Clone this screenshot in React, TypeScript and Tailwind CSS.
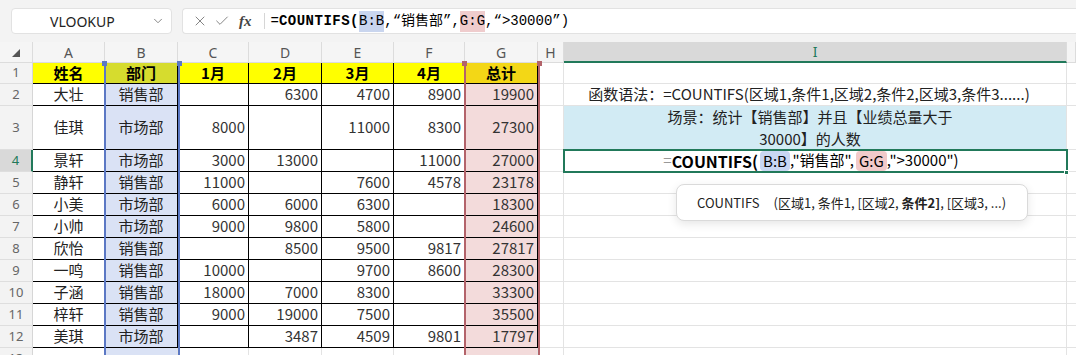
import { X, Check, ChevronDown } from 'lucide-react'

const W = [
  'w-[33px]', 'w-[72px]', 'w-[73px]', 'w-[71px]', 'w-[73px]', 'w-[72px]',
  'w-[71px]', 'w-[73px]', 'w-[26px]', 'w-[503px]', 'w-[9px]',
]
const LETTERS = ['', 'A', 'B', 'C', 'D', 'E', 'F', 'G', 'H', 'I', '']

const HEAD = ['姓名', '部门', '1月', '2月', '3月', '4月', '总计']
const DATA = [
  ['大壮', '销售部', '', '6300', '4700', '8900', '19900'],
  ['佳琪', '市场部', '8000', '', '11000', '8300', '27300'],
  ['景轩', '市场部', '3000', '13000', '', '11000', '27000'],
  ['静轩', '销售部', '11000', '', '7600', '4578', '23178'],
  ['小美', '市场部', '6000', '6000', '6300', '', '18300'],
  ['小帅', '市场部', '9000', '9800', '5800', '', '24600'],
  ['欣怡', '销售部', '', '8500', '9500', '9817', '27817'],
  ['一鸣', '销售部', '10000', '', '9700', '8600', '28300'],
  ['子涵', '销售部', '18000', '7000', '8300', '', '33300'],
  ['梓轩', '销售部', '9000', '19000', '7500', '', '35500'],
  ['美琪', '市场部', '', '3487', '4509', '9801', '17797'],
]

const headBg = ['bg-[#ffff00]', 'bg-[#d6dc2e]', 'bg-[#ffff00]', 'bg-[#ffff00]', 'bg-[#ffff00]', 'bg-[#ffff00]', 'bg-[#f3d716]']

function RowHead({ n, h, active }: { n: number; h: string; active?: boolean }) {
  return (
    <div
      className={`${W[0]} ${h} shrink-0 flex items-center justify-center border-b border-b-[#dedede] text-[13px] font-['Noto_Sans',sans-serif] ${
        active
          ? 'bg-[#d9d9d9] text-[#21795a] border-r-2 border-r-[#21795a]'
          : 'bg-[#f3f3f3] text-[#666] border-r border-r-[#d6d6d6]'
      }`}
    >
      {n}
    </div>
  )
}

function RightCells({ h, children, iClass = '' }: { h: string; children?: React.ReactNode; iClass?: string }) {
  return (
    <>
      <div className={`${W[8]} ${h} shrink-0 border-r border-b border-[#e3e3e3]`} />
      <div className={`${W[9]} ${h} shrink-0 border-r border-b border-[#e3e3e3] flex flex-col items-center justify-center text-[15px] text-[#222] ${iClass}`}>
        {children}
      </div>
      <div className={`${W[10]} ${h} shrink-0 border-b border-[#e3e3e3]`} />
    </>
  )
}

function DataCells({ row, h }: { row: string[]; h: string }) {
  return (
    <>
      {row.map((v, i) => {
        const num = i >= 2
        const bg = i === 1 ? 'bg-[#dae2f5]' : i === 6 ? 'bg-[#f3dbdb]' : 'bg-white'
        return (
          <div
            key={i}
            className={`${W[i + 1]} ${h} shrink-0 flex items-center border-r border-b border-black text-[15px] ${bg} ${
              num ? 'justify-end pr-[3px] text-[#333]' : 'justify-center text-[#222]'
            }`}
          >
            {v}
          </div>
        )
      })}
    </>
  )
}

export default function App() {
  return (
    <div className="relative w-[1076px] h-[355px] overflow-hidden bg-white font-['Noto_Sans_CJK_SC','Noto_Sans',sans-serif]">
      {/* Formula bar */}
      <div className="h-[42px] bg-[#f3f3f3] flex items-start pt-[8px] pl-[11px] gap-[10px]">
        <div className="w-[161px] h-[26px] bg-white border border-[#e2e2e2] rounded-[4px] flex items-center justify-between pl-[38px] pr-[6px]">
          <span className="text-[14px] text-[#222] font-['Noto_Sans',sans-serif]">VLOOKUP</span>
          <ChevronDown size={14} strokeWidth={1.5} className="text-[#777]" />
        </div>
        <div className="flex-1 h-[26px] bg-white border border-[#e2e2e2] border-r-0 rounded-l-[4px] flex items-center">
          <div className="flex items-center gap-[6px] pl-[9px] text-[#666]">
            <X size={16} strokeWidth={1.2} />
            <Check size={16} strokeWidth={1.2} />
            <span className="ml-[3px] text-[15px] italic font-bold font-['Liberation_Serif',serif] text-[#444]">fx</span>
          </div>
          <div className="ml-[12px] w-px h-[16px] bg-[#d6d6d6]" />
          <div className="ml-[6px] flex items-center text-[14px] text-black font-['Liberation_Mono','Noto_Sans_CJK_SC',monospace] whitespace-pre">
            <span>=</span>
            <span className="font-bold tracking-[0.5px]">COUNTIFS(</span>
            <span className="bg-[#c9d5ee]">B:B</span>
            <span>,“销售部”,</span>
            <span className="bg-[#efcccd]">G:G</span>
            <span>,“&gt;30000”)</span>
          </div>
        </div>
      </div>

      {/* Column headers */}
      <div className="flex h-[21px]">
        {LETTERS.map((l, i) => (
          <div
            key={i}
            className={`${W[i]} h-[21px] shrink-0 flex items-center justify-center text-[14px] font-['Noto_Sans',sans-serif] border-r border-r-[#dcdcdc] ${
              i === 9
                ? 'bg-[#d9d9d9] text-[#21795a] border-b-2 border-b-[#21795a]'
                : 'bg-[#f5f5f5] text-[#555] border-b border-b-[#dcdcdc]'
            }`}
          >
            {i === 0 ? (
              <svg width="8" height="8" viewBox="0 0 8 8" className="mt-[2px]">
                <polygon points="8,0 8,8 0,8" fill="#555" />
              </svg>
            ) : (
              l
            )}
          </div>
        ))}
      </div>

      {/* Row 1 */}
      <div className="flex">
        <RowHead n={1} h="h-[21px]" />
        {HEAD.map((v, i) => (
          <div
            key={i}
            className={`${W[i + 1]} h-[21px] shrink-0 flex items-center justify-center border-r border-b border-black text-[15px] font-bold text-black ${headBg[i]}`}
          >
            {v}
          </div>
        ))}
        <RightCells h="h-[21px]" />
      </div>

      {/* Row 2 */}
      <div className="flex">
        <RowHead n={2} h="h-[22px]" />
        <DataCells row={DATA[0]} h="h-[22px]" />
        <RightCells h="h-[22px]" iClass="pr-[12px]">
          <span className="whitespace-nowrap">函数语法：=COUNTIFS(区域1,条件1,区域2,条件2,区域3,条件3......)</span>
        </RightCells>
      </div>

      {/* Row 3 */}
      <div className="flex">
        <RowHead n={3} h="h-[44px]" />
        <DataCells row={DATA[1]} h="h-[44px]" />
        <RightCells h="h-[44px]" iClass="bg-[#d2ebf4] leading-[22px] pr-[10px]">
          <span>场景：统计【销售部】并且【业绩总量大于</span>
          <span>30000】的人数</span>
        </RightCells>
      </div>

      {/* Row 4 */}
      <div className="flex">
        <RowHead n={4} h="h-[22px]" active />
        <DataCells row={DATA[2]} h="h-[22px]" />
        <RightCells h="h-[22px]" iClass="pr-[8px]">
          <div className="flex items-center whitespace-pre text-[15px] text-black">
            <span className="text-[#999]">=</span>
            <span className="font-bold text-[16px]">COUNTIFS(</span>
            <span className="ml-[2px] px-[3px] bg-[#c8d6f2] rounded-[4px] leading-[20px]">B:B</span>
            <span>,"销售部",</span>
            <span className="ml-[2px] px-[3px] bg-[#f2caca] rounded-[4px] leading-[20px]">G:G</span>
            <span>,"&gt;30000")</span>
          </div>
        </RightCells>
      </div>

      {/* Rows 5-12 */}
      {DATA.slice(3).map((r, k) => (
        <div key={k} className="flex">
          <RowHead n={k + 5} h="h-[22px]" />
          <DataCells row={r} h="h-[22px]" />
          <RightCells h="h-[22px]" />
        </div>
      ))}

      {/* Row 13 */}
      <div className="flex">
        <RowHead n={13} h="h-[22px]" />
        {W.slice(1, 8).map((w, i) => (
          <div
            key={i}
            className={`${w} h-[22px] shrink-0 border-r border-b border-[#e3e3e3] ${
              i === 1 ? 'bg-[#dae2f5]' : i === 6 ? 'bg-[#f3dbdb]' : ''
            }`}
          />
        ))}
        <RightCells h="h-[22px]" />
      </div>

      {/* Range highlights */}
      <div className="absolute left-[104px] top-[63px] w-[76px] h-[300px] border-x-2 border-[#5b78c4]" />
      <div className="absolute left-[102px] top-[61px] w-[5px] h-[5px] bg-[#5b78c4]" />
      <div className="absolute left-[177px] top-[61px] w-[5px] h-[5px] bg-[#5b78c4]" />
      <div className="absolute left-[464px] top-[63px] w-[76px] h-[300px] border-x-2 border-[#b3636a]" />
      <div className="absolute left-[462px] top-[61px] w-[5px] h-[5px] bg-[#b3636a]" />
      <div className="absolute left-[537px] top-[61px] w-[5px] h-[5px] bg-[#b3636a]" />

      {/* Active cell */}
      <div className="absolute left-[563px] top-[149px] w-[505px] h-[24px] border-2 border-[#21795a]" />
      <div className="absolute left-[1064px] top-[170px] w-[5px] h-[5px] bg-[#21795a] border border-white" />

      {/* Function tooltip */}
      <div className="absolute left-[676px] top-[184px] w-[352px] h-[37px] bg-white rounded-[8px] border border-[#dadada] shadow-[0_3px_10px_rgba(0,0,0,0.10)] flex items-center pl-[20px] text-[13px] text-[#222] whitespace-pre">
        <span>COUNTIFS</span>
        <span className="ml-[14px]">(区域1, 条件1, [区域2, </span>
        <span className="font-bold">条件2]</span>
        <span>, [区域3, ...)</span>
      </div>
    </div>
  )
}
